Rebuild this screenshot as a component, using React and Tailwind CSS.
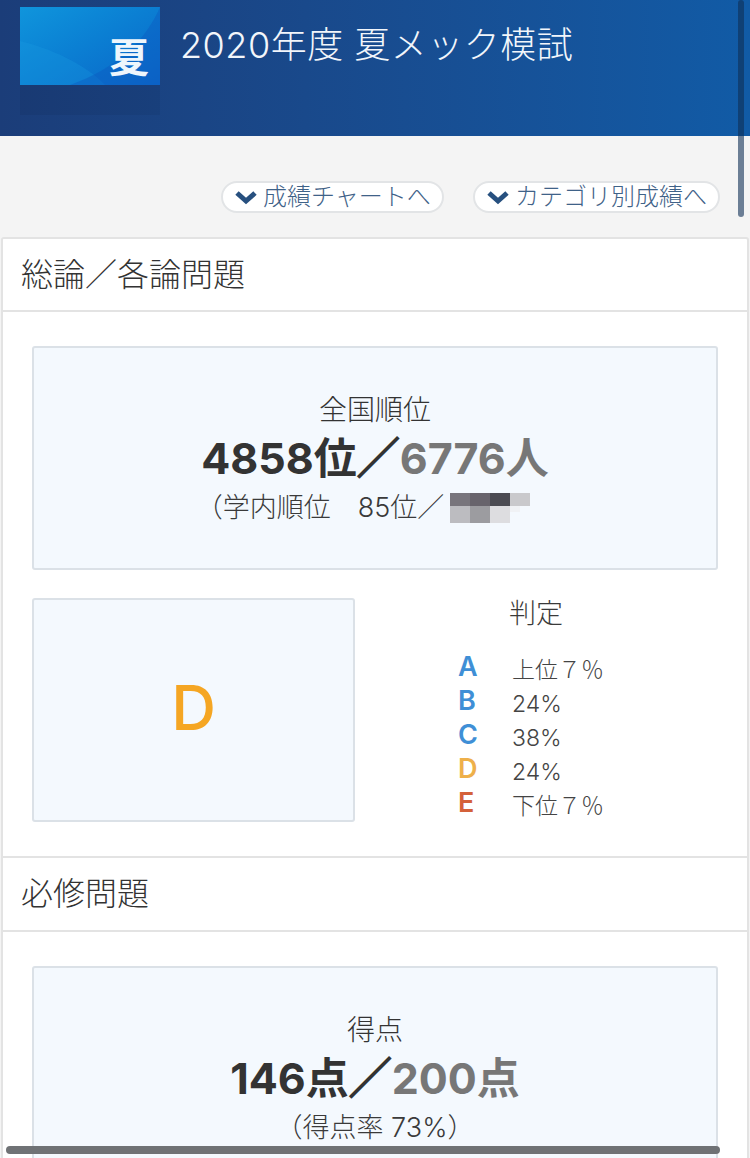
const sans = "font-['Inter','Noto_Sans_CJK_JP',sans-serif]";

const grades = [
  { letter: "A", color: "text-[#3f8fd6]", label: "上位７％" },
  { letter: "B", color: "text-[#3f8fd6]", label: "24%" },
  { letter: "C", color: "text-[#3f8fd6]", label: "38%" },
  { letter: "D", color: "text-[#eeb04a]", label: "24%" },
  { letter: "E", color: "text-[#d4613a]", label: "下位７％" },
];

function Chevron() {
  return (
    <svg width="24" height="16" viewBox="0 0 24 16" className="shrink-0">
      <path d="M3 4 L12 12 L21 4" fill="none" stroke="#27507f" strokeWidth="5" />
    </svg>
  );
}

function Pill({ label, width }) {
  return (
    <a className={`flex h-8 items-center justify-center gap-[5px] rounded-full border-2 border-[#e2e4e6] bg-white text-2xl leading-none font-light text-[#3f6288] ${width}`}>
      <Chevron />
      <span>{label}</span>
    </a>
  );
}

function Logo() {
  return (
    <div className="relative h-[78px] w-[140px] overflow-hidden bg-gradient-to-br from-[#1095dc] to-[#0c66c8]">
      <svg width="140" height="78" viewBox="0 0 140 78" className="absolute inset-0">
        <path d="M0 34 C40 44 70 62 85 78 L0 78 Z" fill="#1a9be0" opacity="0.3" />
        <path d="M50 78 C95 62 125 35 140 0 L140 78 Z" fill="#0a5cc0" opacity="0.45" />
      </svg>
      <span className="absolute top-[29px] left-[89px] text-[40px] leading-[46px] font-bold text-[#eef6fc] font-['Liberation_Serif','Noto_Sans_CJK_JP',serif]">
        夏
      </span>
    </div>
  );
}

function Mosaic() {
  return (
    <svg width="94" height="32" viewBox="0 0 94 32" className="ml-[6px] inline-block translate-y-[2px]">
      <rect x="0" y="0" width="20" height="13" fill="#78757c" />
      <rect x="20" y="0" width="20" height="13" fill="#68646c" />
      <rect x="40" y="0" width="20" height="13" fill="#4b4b52" />
      <rect x="60" y="0" width="20" height="13" fill="#c9c9cc" />
      <rect x="0" y="13" width="20" height="17" fill="#bcbcc0" />
      <rect x="20" y="13" width="20" height="17" fill="#9c9ca0" />
      <rect x="40" y="13" width="20" height="17" fill="#dddde0" />
      <rect x="60" y="13" width="10" height="6" fill="#f0f2f5" />
    </svg>
  );
}

function SectionTitle({ children, height }) {
  return (
    <h2 className={`flex items-center border-b-2 border-[#e3e3e3] pl-[18px] text-[32px] leading-none font-light text-[#333] ${height}`}>
      {children}
    </h2>
  );
}

function StatBox({ title, main, total, sub }) {
  return (
    <div className="flex h-[224px] flex-col items-center rounded-[3px] border-2 border-[#dbe1e7] bg-[#f4f9fe] pt-[44px]">
      <p className="text-[28px] leading-[36px] font-light text-[#333]">{title}</p>
      <p className="mt-[2px] flex h-[56px] items-center text-[43px] leading-none font-bold">
        <span className="text-[#333]">{main}</span>
        <span className="text-[#333] [-webkit-text-stroke:1.5px_#333]">／</span>
        <span className="text-[#777]">{total}</span>
      </p>
      <div className="flex h-[42px] items-center text-[27px] leading-none font-light text-[#3a3a3a]">{sub}</div>
    </div>
  );
}

export default function App() {
  return (
    <div className={`relative h-[1158px] w-[750px] overflow-hidden bg-[#f4f4f4] ${sans}`}>
      <header className="h-[136px] bg-gradient-to-r from-[#1b3d79] to-[#115ba6] pt-[7px] pl-5">
        <div className="flex items-start gap-5">
          <div>
            <Logo />
            <div className="h-[30px] w-[140px] bg-black/5" />
          </div>
          <h1 className="mt-[17px] text-[36px] leading-[42px] font-light tracking-[0.5px] whitespace-nowrap text-[#f2f6fb]">
            2020年度 夏メック模試
          </h1>
        </div>
      </header>

      <nav className="flex h-[101px] items-start justify-end gap-[29px] pt-[45px] pr-[30px]">
        <Pill label="成績チャートへ" width="w-[223px]" />
        <Pill label="カテゴリ別成績へ" width="w-[247px]" />
      </nav>

      <main className="mx-px rounded-t-[3px] border-2 border-b-0 border-[#e3e3e3] bg-white">
        <SectionTitle height="h-[73px]">総論／各論問題</SectionTitle>

        <section className="border-b-2 border-[#e3e3e3] px-[29px] pt-[34px] pb-[33px]">
          <StatBox
            title="全国順位"
            main="4858位"
            total="6776人"
            sub={
              <>
                <span>（学内順位　85位／</span>
                <Mosaic />
                <span className="w-[10px]" />
              </>
            }
          />

          <div className="mt-[28px] flex">
            <div className="flex h-[224px] w-[323px] items-center justify-center rounded-[3px] border-2 border-[#dbe1e7] bg-[#f4f9fe] pb-1 text-[62px] leading-none font-medium text-[#f5a623]">
              D
            </div>
            <div className="pl-[103px]">
              <p className="ml-[51px] text-[27px] leading-[32px] font-light text-[#3a3a3a]">判定</p>
              <ul className="mt-[23px]">
                {grades.map((g) => (
                  <li key={g.letter} className="flex h-[34px] items-center">
                    <span className={`w-[54px] -translate-y-[4px] text-[27px] leading-none font-semibold ${g.color}`}>{g.letter}</span>
                    <span className="text-[23px] leading-none font-light text-[#444]">{g.label}</span>
                  </li>
                ))}
              </ul>
            </div>
          </div>
        </section>

        <SectionTitle height="h-[74px]">必修問題</SectionTitle>

        <section className="px-[29px] pt-[34px]">
          <StatBox title="得点" main="146点" total="200点" sub={<span>（得点率 73%）</span>} />
        </section>
      </main>

      <div className="absolute top-0 right-[6px] h-[217px] w-[6px] rounded-full bg-[#0f2f55]/60" />
      <div className="absolute bottom-1 left-[6px] h-2 w-[714px] rounded-full bg-[#6f7275]" />
    </div>
  );
}
